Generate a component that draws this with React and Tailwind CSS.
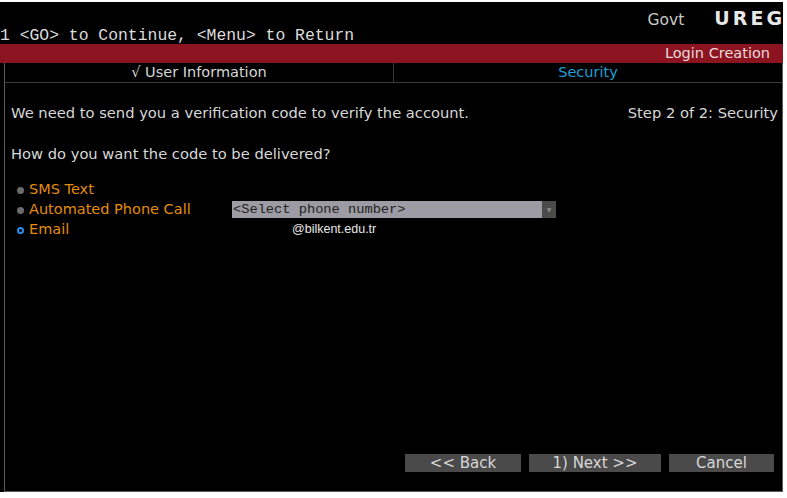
import React from "react";

const mono = { fontFamily: '"Liberation Mono", "DejaVu Sans Mono", monospace' };
const sans = { fontFamily: '"DejaVu Sans", "Open Sans", sans-serif' };

const Radio = ({ label, selected }) => (
  <div className="flex items-center h-[20px]">
    {selected ? (
      <span className="w-[7px] h-[7px] rounded-full border-2 border-[#2a8ee8] ml-[12px] mr-[5px]" />
    ) : (
      <span className="w-[7px] h-[7px] rounded-full bg-[#6b6b6b] ml-[12px] mr-[5px]" />
    )}
    <span className="text-[#e38d0c] text-[14.5px]">{label}</span>
  </div>
);

const Btn = ({ children, w }) => (
  <div className={`${w} h-[18px] bg-[#4a4a4a] text-[#d8d8d8] text-[15px] leading-[18px] text-center`}>
    {children}
  </div>
);

export default function App() {
  return (
    <div className="w-[787px] h-[498px] bg-white pt-[2px]" style={sans}>
      <div className="w-[783px] h-[490px] bg-black flex flex-col">
        {/* header */}
        <div className="h-[42px] relative">
          <div className="absolute right-[-2px] top-[2px] flex items-baseline gap-[30px]">
            <span className="text-[#c8c8c8] text-[15.5px]">Govt</span>
            <span className="text-[#e8e8e8] text-[19px] font-bold tracking-[3px]">UREG</span>
          </div>
          <div className="absolute left-0 top-[22px] text-[#dcdcdc] text-[16.4px] whitespace-nowrap" style={mono}>
            1 &lt;GO&gt; to Continue, &lt;Menu&gt; to Return
          </div>
        </div>
        <div className="h-[19px] bg-[#8b1420] flex items-center justify-end pr-[13px]">
          <span className="text-[#eadada] text-[14.5px]">Login Creation</span>
        </div>
        {/* panel */}
        <div className="flex-1 ml-[4px] border-l border-r border-b border-[#5a5a5a] flex flex-col">
          <div className="h-[20px] flex border-b border-[#3a3a3a]">
            <div className="w-[389px] border-r border-[#3a3a3a] text-center text-[#d6d6d6] text-[14.5px] leading-[19px]">
              √ User Information
            </div>
            <div className="flex-1 text-center text-[#1ea1d4] text-[14.5px] leading-[19px]">Security</div>
          </div>
          <div className="flex justify-between pl-[6px] pr-[4px] mt-[19px] text-[#d8d8d8] text-[14.7px]">
            <span>We need to send you a verification code to verify the account.</span>
            <span>Step 2 of 2: Security</span>
          </div>
          <div className="pl-[6px] mt-[19px] text-[#d8d8d8] text-[14.7px]">How do you want the code to be delivered?</div>
          <div className="mt-[15px] flex">
            <div className="flex flex-col w-[227px]">
              <Radio label="SMS Text" />
              <Radio label="Automated Phone Call" />
              <Radio label="Email" selected />
            </div>
            <div className="flex flex-col pt-[21px]">
              <div className="flex h-[17px] w-[324px]">
                <div className="flex-1 bg-[#9d9ca4] text-[#222] text-[13.7px] leading-[17px] pl-[1px]" style={mono}>
                  &lt;Select phone number&gt;
                </div>
                <div className="w-[14px] bg-[#4b4b4b] flex items-center justify-center">
                  <span className="text-[#8a8a8a] text-[6px]">▼</span>
                </div>
              </div>
              <div className="pl-[60px] mt-[2px] text-[#e8e8e8] text-[12.5px]" style={{ fontFamily: '"Liberation Sans", sans-serif' }}>
                @bilkent.edu.tr
              </div>
            </div>
          </div>
          <div className="flex-1" />
          <div className="flex justify-end gap-[8px] pr-[8px] mb-[19px]">
            <Btn w="w-[116px]">&lt;&lt; Back</Btn>
            <Btn w="w-[132px]">1) Next &gt;&gt;</Btn>
            <Btn w="w-[105px]">Cancel</Btn>
          </div>
        </div>
      </div>
    </div>
  );
}
